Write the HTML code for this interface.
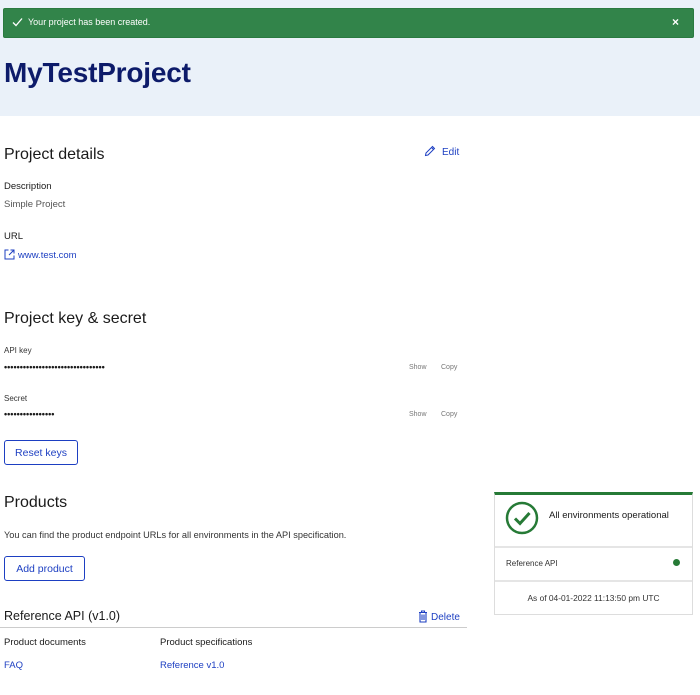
<!DOCTYPE html>
<html><head><style>
*{margin:0;padding:0;box-sizing:border-box}
body{width:700px;height:695px;position:relative;background:#fff;font-family:"Liberation Sans",sans-serif;color:#1a1a1a;overflow:hidden}
.a{position:absolute;white-space:nowrap}
.lnk{color:#1d3fc2}
.btn{position:absolute;border:1px solid #1d3fc2;border-radius:3px;color:#1d3fc2;font-size:10.5px;display:flex;align-items:center;justify-content:center}
.dots{font-size:9px;letter-spacing:0;font-weight:bold}
</style></head><body>
<div class="a" style="left:0;top:0;width:700px;height:116px;background:#eaf1f9"></div>
<div class="a" style="left:3px;top:8px;width:691px;height:30px;background:#32844a;border-radius:2px;border:1px solid #2a7a40"></div>
<svg class="a" style="left:12px;top:17px" width="11" height="10" viewBox="0 0 11 10"><path d="M1 5.5 L4 8.5 L10 1.5" stroke="#fff" stroke-width="1.3" fill="none"/></svg>
<div class="a" style="left:28px;top:17px;font-size:9px;color:#fff">Your project has been created.</div>
<div class="a" style="left:672px;top:15px;font-size:12px;color:#fff;font-weight:bold">×</div>
<div class="a" style="left:4px;top:57px;font-size:28px;font-weight:bold;color:#0d1b6a;letter-spacing:-0.2px">MyTestProject</div>

<div class="a" style="left:4px;top:146px;font-size:16px">Project details</div>
<svg class="a" style="left:424px;top:145px" width="12" height="12" viewBox="0 0 12 12"><path d="M1.5 10.5 L2 8 L8.5 1.5 L10.5 3.5 L4 10 Z M7.5 2.5 L9.5 4.5" stroke="#1d3fc2" stroke-width="1" fill="none"/></svg>
<div class="a lnk" style="left:442px;top:147px;font-size:10px">Edit</div>
<div class="a" style="left:4px;top:181px;font-size:9.5px">Description</div>
<div class="a" style="left:4px;top:199px;font-size:9.5px;color:#555">Simple Project</div>
<div class="a" style="left:4px;top:231px;font-size:9.5px">URL</div>
<svg class="a" style="left:4px;top:249px" width="11" height="11" viewBox="0 0 11 11"><path d="M4.5 1H1V10H10V6.5 M6.5 1H10V4.5 M10 1L5 6" stroke="#1d3fc2" stroke-width="1" fill="none"/></svg>
<div class="a lnk" style="left:18px;top:250px;font-size:9.5px">www.test.com</div>

<div class="a" style="left:4px;top:310px;font-size:16px">Project key &amp; secret</div>
<div class="a" style="left:4px;top:346px;font-size:8px;color:#333">API key</div>
<div class="a dots" style="left:4px;top:362px">••••••••••••••••••••••••••••••••</div>
<div class="a" style="left:409px;top:364px;font-size:7px;color:#777">Show</div>
<div class="a" style="left:441px;top:364px;font-size:7px;color:#777">Copy</div>
<div class="a" style="left:4px;top:394px;font-size:8px;color:#333">Secret</div>
<div class="a dots" style="left:4px;top:409px">••••••••••••••••</div>
<div class="a" style="left:409px;top:411px;font-size:7px;color:#777">Show</div>
<div class="a" style="left:441px;top:411px;font-size:7px;color:#777">Copy</div>
<div class="btn" style="left:4px;top:440px;width:74px;height:25px">Reset keys</div>

<div class="a" style="left:4px;top:494px;font-size:16px">Products</div>
<div class="a" style="left:4px;top:530px;font-size:9.2px;color:#333">You can find the product endpoint URLs for all environments in the API specification.</div>
<div class="btn" style="left:4px;top:556px;width:81px;height:25px">Add product</div>
<div class="a" style="left:4px;top:609px;font-size:12.5px">Reference API (v1.0)</div>
<svg class="a" style="left:418px;top:610px" width="10" height="13" viewBox="0 0 10 13"><path d="M1 2.5H9 M3.5 2.5V1H6.5V2.5 M2 2.5V12H8V2.5 M4 4.5V10 M6 4.5V10" stroke="#1d3fc2" stroke-width="1.1" fill="none"/></svg>
<div class="a lnk" style="left:431px;top:612px;font-size:10px">Delete</div>
<div class="a" style="left:0;top:627px;width:467px;height:1px;background:#ccc"></div>
<div class="a" style="left:4px;top:637px;font-size:9.5px">Product documents</div>
<div class="a" style="left:160px;top:637px;font-size:9.5px">Product specifications</div>
<div class="a lnk" style="left:4px;top:660px;font-size:9.5px">FAQ</div>
<div class="a lnk" style="left:160px;top:660px;font-size:9.5px">Reference v1.0</div>

<div class="a" style="left:494px;top:492px;width:199px;height:123px;border:1px solid #ddd;border-top:3px solid #267a36"></div>
<svg class="a" style="left:505px;top:501px" width="34" height="34" viewBox="0 0 34 34"><circle cx="17" cy="17" r="15" stroke="#267a36" stroke-width="2.5" fill="none"/><path d="M10 17.5 L15 22.5 L24.5 12" stroke="#267a36" stroke-width="3" fill="none"/></svg>
<div class="a" style="left:549px;top:510px;font-size:9.5px">All environments operational</div>
<div class="a" style="left:495px;top:546px;width:197px;height:2px;background:#e5e5e5"></div>
<div class="a" style="left:506px;top:559px;font-size:8px;color:#333">Reference API</div>
<div class="a" style="left:673px;top:559px;width:7px;height:7px;border-radius:50%;background:#267a36"></div>
<div class="a" style="left:495px;top:580px;width:197px;height:2px;background:#e5e5e5"></div>
<div class="a" style="left:494px;top:593px;width:199px;text-align:center;font-size:8.4px;color:#333">As of 04-01-2022 11:13:50 pm UTC</div>
</body></html>
